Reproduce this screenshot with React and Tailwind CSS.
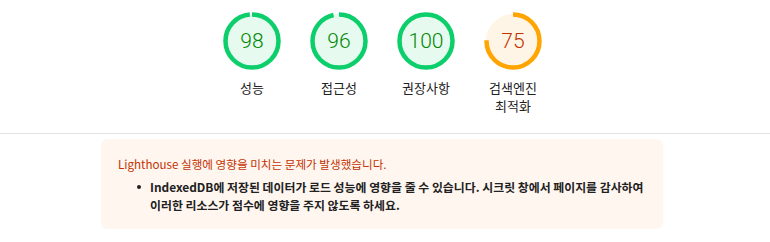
import React from "react";

const gauges = [
  { score: 98, label: ["성능"], color: "#0cce6b", fill: "#e6faf0", text: "#008800" },
  { score: 96, label: ["접근성"], color: "#0cce6b", fill: "#e6faf0", text: "#008800" },
  { score: 100, label: ["권장사항"], color: "#0cce6b", fill: "#e6faf0", text: "#008800" },
  { score: 75, label: ["검색엔진", "최적화"], color: "#ffa400", fill: "#fff5e6", text: "#c33300" },
];

function Gauge({ score, label, color, fill, text }) {
  const r = 26.5;
  const c = 2 * Math.PI * r;
  const len = (score / 100) * c;
  return (
    <div className="flex w-[87px] flex-col items-center">
      <div className="relative h-[58px] w-[58px]">
        <svg width="58" height="58" viewBox="0 0 58 58" className="absolute left-0 top-0">
          <circle cx="29" cy="29" r="27" fill={fill} />
          <circle
            cx="29"
            cy="29"
            r={r}
            fill="none"
            stroke={color}
            strokeWidth="4.5"
            strokeDasharray={`${len} ${c}`}
            transform="rotate(-90 29 29)"
          />
        </svg>
        <div
          className="absolute inset-0 flex items-center justify-center text-[21px] font-light leading-none"
          style={{ color: text, fontFamily: "Roboto, 'Liberation Sans', sans-serif" }}
        >
          {score}
        </div>
      </div>
      <div className="mt-[9px] flex flex-col items-center text-[13px] leading-[18px] text-[#212121] [font-family:'Noto_Sans_CJK_KR',sans-serif]">
        {label.map((l) => (
          <span key={l}>{l}</span>
        ))}
      </div>
    </div>
  );
}

export default function App() {
  return (
    <div className="h-[242px] w-[770px] overflow-hidden bg-white [font-family:'Noto_Sans_CJK_KR',sans-serif]">
      <div className="flex h-[133px] justify-center pr-[5px] pt-[12px]">
        {gauges.map((g) => (
          <Gauge key={g.score} {...g} />
        ))}
      </div>
      <div className="border-t border-[#e3e3e3]" />
      <div className="ml-[101px] mt-[5px] h-[90px] w-[562px] rounded-[6px] bg-[#fff6f0] pl-[17px] pt-[16px]">
        <div className="text-[11.6px] leading-[18px] text-[#c33300]">
          Lighthouse 실행에 영향을 미치는 문제가 발생했습니다.
        </div>
        <div className="mt-[5px] flex">
          <div className="ml-[19px] mr-[9px] mt-[7px] h-[4px] w-[4px] shrink-0 rounded-full bg-[#212121]" />
          <div className="text-[11.9px] font-bold leading-[18px] text-[#212121] whitespace-nowrap">
            IndexedDB에 저장된 데이터가 로드 성능에 영향을 줄 수 있습니다. 시크릿 창에서 페이지를 감사하여
            <br />
            이러한 리소스가 점수에 영향을 주지 않도록 하세요.
          </div>
        </div>
      </div>
    </div>
  );
}
